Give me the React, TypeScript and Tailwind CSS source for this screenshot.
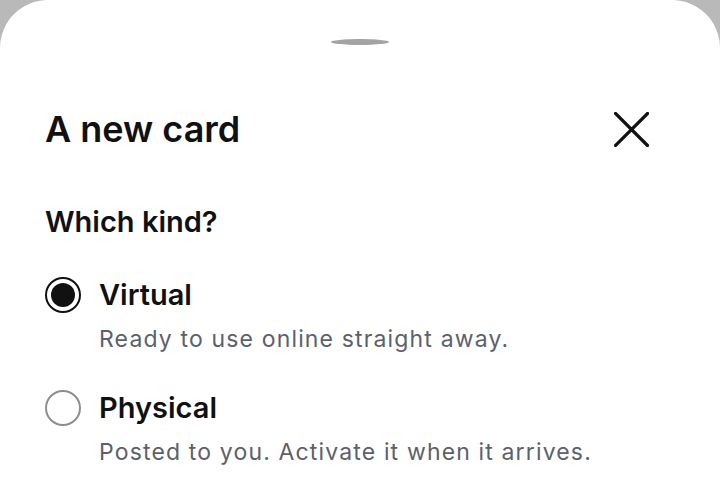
import { useState } from 'react';

const options = [
  { id: 'virtual', label: 'Virtual', hint: 'Ready to use online straight away.' },
  { id: 'physical', label: 'Physical', hint: 'Posted to you. Activate it when it arrives.' },
];

const App = () => {
  const [kind, setKind] = useState('virtual');

  return (
    <div
      className="h-[485px] w-full overflow-hidden bg-[#b9b9b9]"
      style={{ fontFamily: 'Inter, "Noto Sans", sans-serif' }}
    >
      <div className="h-full rounded-t-[48px] bg-white">
        {/* drag handle */}
        <div className="pt-[39px]">
          <div className="mx-auto h-[6px] w-[58px] rounded-[50%] bg-[#a3a3a3]"></div>
        </div>

        <div className="mt-[62px] flex items-center justify-between pl-[45px] pr-[71px]">
          <h1 className="text-[36px] leading-[44px] font-semibold text-[#111111]">A new card</h1>
          <button type="button" aria-label="Close" className="text-[#111111]">
            <svg width="35" height="35" viewBox="0 0 35 35" fill="none">
              <path d="M1.5 1.5L33.5 33.5M33.5 1.5L1.5 33.5" stroke="currentColor" strokeWidth="3.2" strokeLinecap="square" />
            </svg>
          </button>
        </div>

        <div className="pl-[45px]">
          <h2 className="mt-[53px] text-[29px] leading-[36px] font-semibold text-[#111111]">Which kind?</h2>

          <div className="mt-[37px] flex flex-col gap-[36px]">
            {options.map((o) => {
              const checked = kind === o.id;
              return (
                <label key={o.id} className="flex cursor-pointer items-start gap-[18px]" onClick={() => setKind(o.id)}>
                  <span
                    className={
                      checked
                        ? 'flex h-[36px] w-[36px] shrink-0 items-center justify-center rounded-full border-[2.5px] border-[#111111]'
                        : 'flex h-[36px] w-[36px] shrink-0 items-center justify-center rounded-full border-2 border-[#8e8e8e]'
                    }
                  >
                    {checked && <span className="h-[24px] w-[24px] rounded-full bg-[#111111]"></span>}
                  </span>
                  <span className="flex flex-col">
                    <span className="text-[29px] leading-[36px] font-semibold text-[#111111]">{o.label}</span>
                    <span className="mt-[11px] text-[23px] leading-[30px] tracking-[1.15px] text-[#5b616c]">{o.hint}</span>
                  </span>
                </label>
              );
            })}
          </div>
        </div>
      </div>
    </div>
  );
};

export default App;
